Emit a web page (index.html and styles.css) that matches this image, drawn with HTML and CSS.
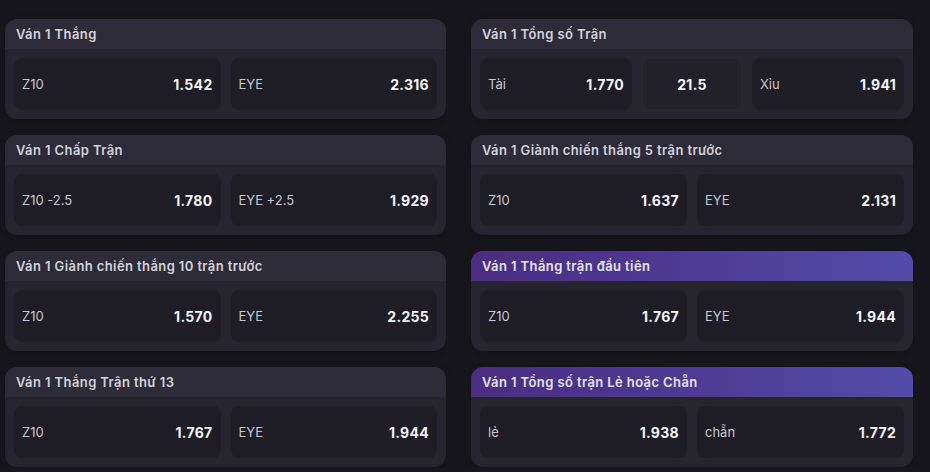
FILE: index.html
```html
<!DOCTYPE html>
<html lang="vi">
<head>
    <meta charset="UTF-8">
    <meta name="viewport" content="width=device-width, initial-scale=1.0">
    <title>Kèo Ván 1</title>
    <link rel="stylesheet" href="styles.css">
</head>
<body>
    <section class="markets">
        <div class="column">
            <div class="market">
                <div class="market-title">Ván 1 Thắng</div>
                <div class="market-body">
                    <div class="odd"><span class="odd-name">Z10</span><span class="odd-value">1.542</span></div>
                    <div class="odd"><span class="odd-name">EYE</span><span class="odd-value">2.316</span></div>
                </div>
            </div>
            <div class="market">
                <div class="market-title">Ván 1 Chấp Trận</div>
                <div class="market-body">
                    <div class="odd"><span class="odd-name">Z10 -2.5</span><span class="odd-value">1.780</span></div>
                    <div class="odd"><span class="odd-name">EYE +2.5</span><span class="odd-value">1.929</span></div>
                </div>
            </div>
            <div class="market">
                <div class="market-title">Ván 1 Giành chiến thắng 10 trận trước</div>
                <div class="market-body">
                    <div class="odd"><span class="odd-name">Z10</span><span class="odd-value">1.570</span></div>
                    <div class="odd"><span class="odd-name">EYE</span><span class="odd-value">2.255</span></div>
                </div>
            </div>
            <div class="market">
                <div class="market-title">Ván 1 Thắng Trận thứ 13</div>
                <div class="market-body">
                    <div class="odd"><span class="odd-name">Z10</span><span class="odd-value">1.767</span></div>
                    <div class="odd"><span class="odd-name">EYE</span><span class="odd-value">1.944</span></div>
                </div>
            </div>
        </div>

        <div class="column">
            <div class="market">
                <div class="market-title">Ván 1 Tổng số Trận</div>
                <div class="market-body three">
                    <div class="odd"><span class="odd-name">Tài</span><span class="odd-value">1.770</span></div>
                    <div class="odd line"><span class="odd-value">21.5</span></div>
                    <div class="odd"><span class="odd-name">Xỉu</span><span class="odd-value">1.941</span></div>
                </div>
            </div>
            <div class="market">
                <div class="market-title">Ván 1 Giành chiến thắng 5 trận trước</div>
                <div class="market-body">
                    <div class="odd"><span class="odd-name">Z10</span><span class="odd-value">1.637</span></div>
                    <div class="odd"><span class="odd-name">EYE</span><span class="odd-value">2.131</span></div>
                </div>
            </div>
            <div class="market featured">
                <div class="market-title">Ván 1 Thắng trận đầu tiên</div>
                <div class="market-body">
                    <div class="odd"><span class="odd-name">Z10</span><span class="odd-value">1.767</span></div>
                    <div class="odd"><span class="odd-name">EYE</span><span class="odd-value">1.944</span></div>
                </div>
            </div>
            <div class="market featured">
                <div class="market-title">Ván 1 Tổng số trận Lẻ hoặc Chẵn</div>
                <div class="market-body">
                    <div class="odd"><span class="odd-name">lẻ</span><span class="odd-value">1.938</span></div>
                    <div class="odd"><span class="odd-name">chẵn</span><span class="odd-value">1.772</span></div>
                </div>
            </div>
        </div>
    </section>
</body>
</html>
```

FILE: styles.css
```css
* {
    margin: 0;
    padding: 0;
    box-sizing: border-box;
}

body {
    font-family: 'Inter', 'Noto Sans', sans-serif;
    background-color: #17161c;
    color: #c9c8d2;
    overflow: hidden;
}

.markets {
    display: grid;
    grid-template-columns: 441px 442px;
    column-gap: 25px;
    padding: 19px 0 0 5px;
}

.column {
    display: flex;
    flex-direction: column;
    gap: 16px;
}

.market {
    height: 100px;
    background-color: #26252f;
    border-radius: 12px;
    overflow: hidden;
    box-shadow: 0 2px 6px rgba(0,0,0,0.25);
}

.market-title {
    height: 30px;
    padding: 0 11px;
    display: flex;
    align-items: center;
    background-color: #2d2b37;
    color: #d3d2db;
    font-size: 13px;
    font-weight: 600;
    letter-spacing: 0.4px;
}

.market.featured .market-title {
    background: linear-gradient(90deg, #4a2d80 0%, #4d3b95 50%, #544ba8 100%);
    color: #e6e3f2;
}

.market-body {
    display: grid;
    grid-template-columns: 1fr 1fr;
    gap: 10px;
    padding: 9px 9px 8px 9px;
}

.market-body.three {
    grid-template-columns: 152px 100px 152px;
}

.odd {
    height: 52px;
    background-color: #1e1d25;
    border-radius: 8px;
    display: flex;
    align-items: center;
    justify-content: space-between;
    padding: 0 8px;
}

.odd.line {
    justify-content: center;
    background-color: #22212a;
    border: 1px solid #2a2933;
}

.odd-name {
    font-size: 13px;
    color: #c6c5cf;
}

.odd-value {
    font-size: 14px;
    font-weight: 700;
    letter-spacing: 0.3px;
    color: #f4f4f8;
}
```
